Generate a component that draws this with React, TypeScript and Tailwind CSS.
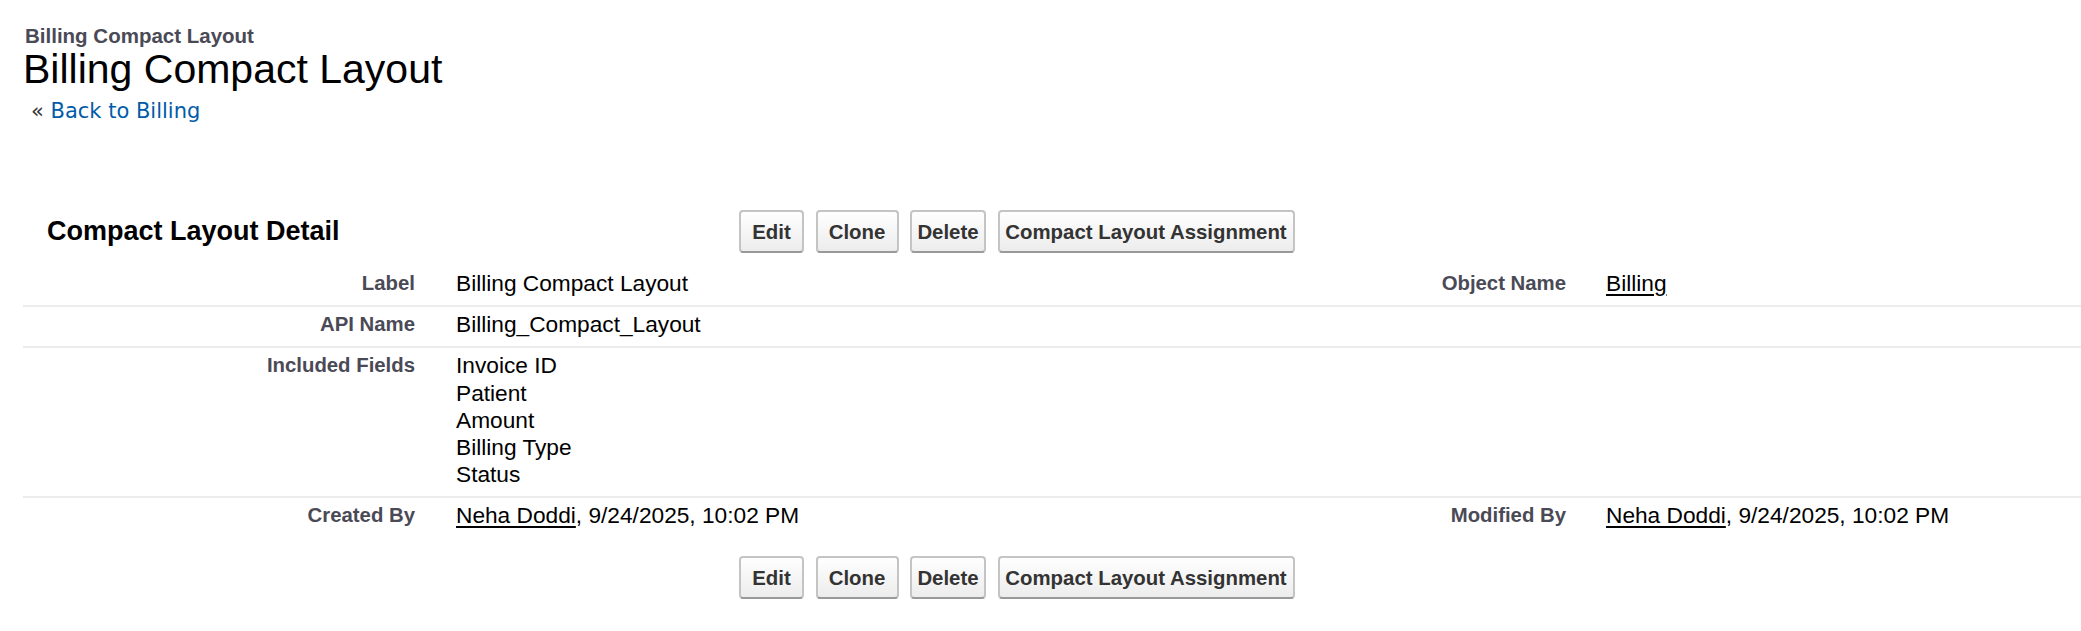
const arial = { fontFamily: '"Liberation Sans", Arial, sans-serif' };

type Row = {
  label: string;
  value: React.ReactNode;
  label2?: string;
  value2?: React.ReactNode;
  last?: boolean;
};

function Btn({ children, w }: { children: React.ReactNode; w: string }) {
  return (
    <button
      className={`${w} flex h-[43px] items-center justify-center rounded-[4px] border-2 border-[#c4c4c4] border-b-[#999999] bg-linear-to-b from-white to-[#ececec] text-[20.4px] leading-[20px] font-bold text-[#333333]`}
    >
      {children}
    </button>
  );
}

function ButtonBar() {
  return (
    <div className="flex gap-[11.5px]">
      <Btn w="w-[65px]">Edit</Btn>
      <Btn w="w-[83px]">Clone</Btn>
      <Btn w="w-[76px]">Delete</Btn>
      <Btn w="w-[297px]">Compact Layout Assignment</Btn>
    </div>
  );
}

function UserLink({ name }: { name: string }) {
  return (
    <>
      <a className="text-black underline decoration-[2px] underline-offset-[3px]">{name}</a>
      , 9/24/2025, 10:02 PM
    </>
  );
}

const rows: Row[] = [
  {
    label: 'Label',
    value: 'Billing Compact Layout',
    label2: 'Object Name',
    value2: <a className="text-black underline decoration-[2px] underline-offset-[3px]">Billing</a>,
  },
  { label: 'API Name', value: 'Billing_Compact_Layout' },
  {
    label: 'Included Fields',
    value: (
      <>
        <div>Invoice ID</div>
        <div>Patient</div>
        <div>Amount</div>
        <div>Billing Type</div>
        <div>Status</div>
      </>
    ),
  },
  {
    label: 'Created By',
    value: <UserLink name="Neha Doddi" />,
    label2: 'Modified By',
    value2: <UserLink name="Neha Doddi" />,
    last: true,
  },
];

export default function App() {
  return (
    <div className="min-h-screen w-[2081px] overflow-hidden bg-white pl-[23px]" style={arial}>
      {/* page title */}
      <div className="pt-[26px]">
        <div className="pl-[2px] text-[20.5px] leading-[20px] font-bold text-[#4a4a56]">
          Billing Compact Layout
        </div>
        <h1 className="mt-[3px] text-[41px] leading-[41px] text-black">
          Billing Compact Layout
        </h1>
        <div
          className="mt-[11px] pl-[8px] text-[21px] leading-[21px]"
          style={{ fontFamily: '"DejaVu Sans", Verdana, sans-serif' }}
        >
          <span className="text-[#333333]">«</span>{' '}
          <a className="text-[#015ba7]">Back to Billing</a>
        </div>
      </div>

      {/* detail block */}
      <div className="mt-[88px]">
        <div className="flex items-start">
          <h2 className="mt-[6px] w-[716px] pl-[24px] text-[27px] leading-[30px] font-bold text-black">
            Compact Layout Detail
          </h2>
          <ButtonBar />
        </div>

        <div className="mt-[13px]">
          {rows.map((r) => (
            <div
              key={r.label}
              className={`grid grid-cols-[411px_740px_411px_1fr] ${r.last ? '' : 'border-b-2 border-[#ececec]'}`}
            >
              <div className="pt-[4px] pr-[19px] pb-[8px] text-right text-[20.35px] leading-[27.2px] font-bold text-[#4a4a56]">
                {r.label}
              </div>
              <div className="pt-[4px] pb-[8px] pl-[22px] text-[22.7px] leading-[27.2px] text-black">
                {r.value}
              </div>
              <div className="pt-[4px] pr-[19px] pb-[8px] text-right text-[20.35px] leading-[27.2px] font-bold text-[#4a4a56]">
                {r.label2}
              </div>
              <div className="pt-[4px] pb-[8px] pl-[21px] text-[22.7px] leading-[27.2px] text-black">
                {r.value2}
              </div>
            </div>
          ))}
        </div>

        <div className="mt-[18.5px] flex pl-[716px]">
          <ButtonBar />
        </div>
      </div>
    </div>
  );
}
